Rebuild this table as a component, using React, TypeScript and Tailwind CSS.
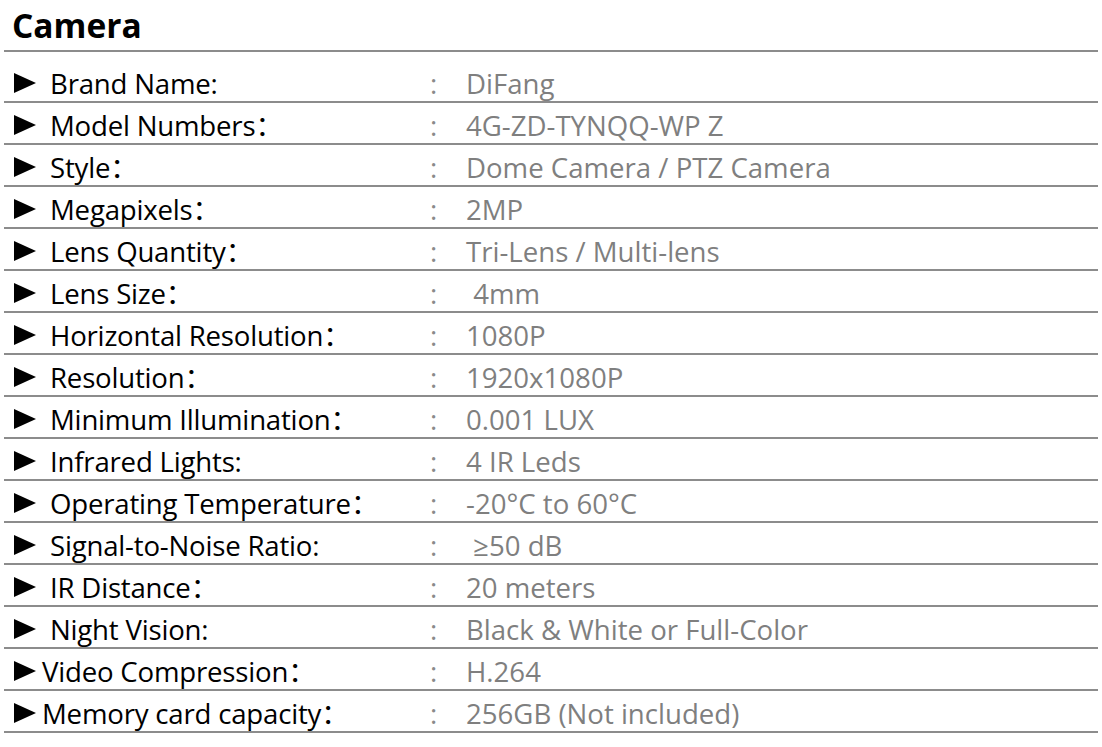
const specs: { label: string; value: string; tight?: boolean }[] = [
  { label: "Brand Name:", value: "DiFang" },
  { label: "Model Numbers：", value: "4G-ZD-TYNQQ-WP Z" },
  { label: "Style：", value: "Dome Camera / PTZ Camera" },
  { label: "Megapixels：", value: "2MP" },
  { label: "Lens Quantity：", value: "Tri-Lens / Multi-lens" },
  { label: "Lens Size：", value: " 4mm" },
  { label: "Horizontal Resolution：", value: "1080P" },
  { label: "Resolution：", value: "1920x1080P" },
  { label: "Minimum Illumination：", value: "0.001 LUX" },
  { label: "Infrared Lights:", value: "4 IR Leds" },
  { label: "Operating Temperature：", value: "-20°C to 60°C" },
  { label: "Signal-to-Noise Ratio:", value: " ≥50 dB" },
  { label: "IR Distance：", value: "20 meters" },
  { label: "Night Vision:", value: "Black & White or Full-Color" },
  { label: "Video Compression：", value: "H.264", tight: true },
  { label: "Memory card capacity：", value: "256GB (Not included)", tight: true },
];

function Arrow() {
  return (
    <svg width="22" height="20" viewBox="0 0 22 20" className="shrink-0">
      <polygon points="0,0 22,10 0,20" fill="#000" />
    </svg>
  );
}

export default function App() {
  return (
    <div
      className="w-[1102px] h-[747px] bg-white px-[4px] overflow-hidden"
      style={{ fontFamily: '"Open Sans", "Noto Sans CJK SC", sans-serif' }}
    >
      <div className="h-[52px] pt-[7px] pl-[8px] border-b-2 border-[#8c8c8c]">
        <h1 className="text-[33.5px] leading-[36px] font-bold text-black">Camera</h1>
      </div>
      <div className="pt-[9px]">
        {specs.map((s) => (
          <div
            key={s.label}
            className="h-[42px] pt-[3px] flex items-center border-b-2 border-[#8c8c8c] text-[27.6px] leading-[28px]"
          >
            <div
              className={
                s.tight
                  ? "w-[426px] flex items-center pl-[10px] gap-[6px]"
                  : "w-[426px] flex items-center pl-[10px] gap-[14px]"
              }
            >
              <Arrow />
              <span className="text-black whitespace-pre tracking-[-0.2px]">{s.label}</span>
            </div>
            <span className="w-[36px] text-[#8a8a8a]">:</span>
            <span className="text-[#7f7f7f] whitespace-pre">{s.value}</span>
          </div>
        ))}
      </div>
    </div>
  );
}
